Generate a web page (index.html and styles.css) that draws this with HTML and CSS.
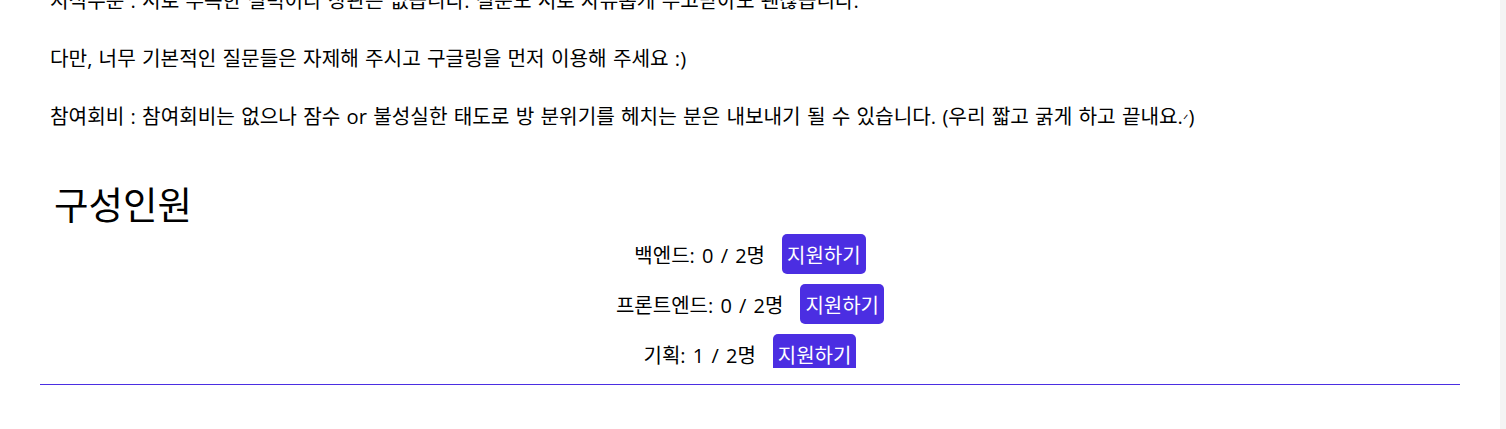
FILE: index.html
```html
<!DOCTYPE html>
<html lang="ko">
<head>
<meta charset="utf-8">
<title>구성인원</title>
<link rel="stylesheet" href="styles.css">
</head>
<body>
<div class="page">
  <main class="main">
    <section class="desc">
      <p class="line">지식수준 : 서로 부족한 실력이라 상관은 없습니다. 질문도 서로 자유롭게 주고받아도 괜찮습니다.</p>
      <p class="line blank">&nbsp;</p>
      <p class="line">다만, 너무 기본적인 질문들은 자제해 주시고 구글링을 먼저 이용해 주세요 :)</p>
      <p class="line blank">&nbsp;</p>
      <p class="line">참여회비 : 참여회비는 없으나 잠수 or 불성실한 태도로 방 분위기를 헤치는 분은 내보내기 될 수 있습니다. (우리 짧고 굵게 하고 끝내요.<span class="mark">ᐟ</span>)</p>
    </section>
    <h1 class="title">구성인원</h1>
    <div class="members">
      <div class="row"><span class="label">백엔드: 0 / 2명</span><button class="apply">지원하기</button></div>
      <div class="row"><span class="label">프론트엔드: 0 / 2명</span><button class="apply">지원하기</button></div>
      <div class="row"><span class="label">기획: 1 / 2명</span><button class="apply">지원하기</button></div>
    </div>
    <hr class="divider">
  </main>
  <div class="scrollbar"></div>
</div>
</body>
</html>
```
FILE: styles.css
```css
html, body {
  margin: 0;
  padding: 0;
  height: 100%;
  overflow: hidden;
  background: #ffffff;
}
body {
  font-family: "Open Sans", "Noto Sans CJK KR", sans-serif;
  color: #000;
}
.page {
  display: flex;
  height: 100%;
}
.main {
  flex: 1;
  margin: -14px 40px 0 40px;
}
.scrollbar {
  width: 6px;
  background: #f4f4f4;
}
.desc {
  padding: 0 10px;
}
.line {
  margin: 0;
  font-size: 20.2px;
  line-height: 29px;
  word-spacing: 1px;
}
.mark {
  font-family: "DejaVu Sans", sans-serif;
  font-size: 13px;
}
.title {
  margin: 48px 0 0 0;
  padding-left: 14px;
  font-size: 37.5px;
  font-weight: 400;
  line-height: 46px;
}
.members {
  margin-top: 6px;
  height: 134px;
  overflow: hidden;
  display: flex;
  flex-direction: column;
  align-items: center;
  gap: 10px;
}
.row {
  display: flex;
  align-items: center;
  gap: 17px;
  height: 40px;
}
.label {
  font-size: 20px;
  word-spacing: 2px;
}
.apply {
  font-family: inherit;
  font-size: 20px;
  color: #fff;
  background: #4b2ee2;
  border: none;
  border-radius: 5px;
  height: 40px;
  padding: 0 5px;
}
.divider {
  margin: 16px 0 0 0;
  border: none;
  height: 1px;
  background: #4b2ee2;
}
```
